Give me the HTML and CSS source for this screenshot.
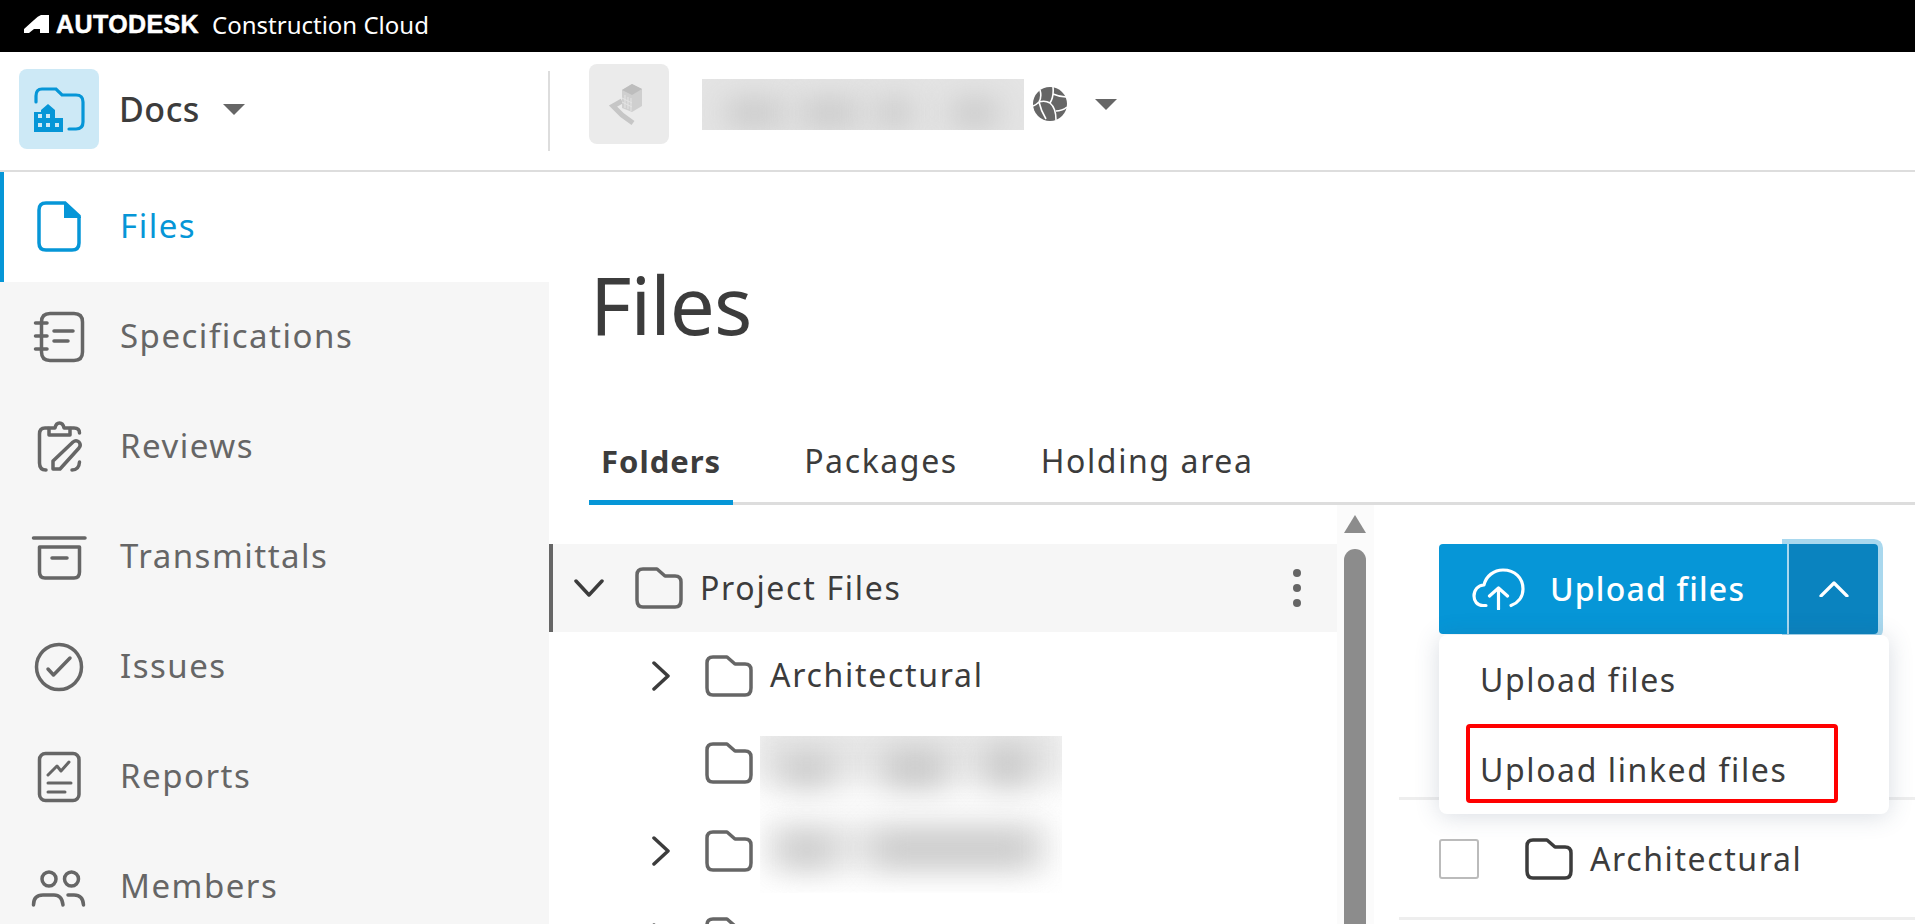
FILE: index.html
```html
<!DOCTYPE html>
<html lang="en">
<head>
  <meta charset="UTF-8" />
  <title>Docs - Files</title>
  <link rel="stylesheet" href="styles.css">
</head>
<body>
  <svg class="defs" width="0" height="0">
    <symbol id="folder" viewBox="0 0 48 42">
      <path d="M2 8Q2 2 8 2H22L30 9H40Q46 9 46 15V33Q46 40 40 40H8Q2 40 2 33Z" fill="none" stroke="currentColor" stroke-width="3.5" stroke-linejoin="round"/>
    </symbol>
    <symbol id="chev-right" viewBox="0 0 20 30">
      <path d="M3 2L17 15L3 28" fill="none" stroke="currentColor" stroke-width="3.5" stroke-linecap="round" stroke-linejoin="round"/>
    </symbol>
  </svg>

  <div class="topbar">
    <svg class="adsk-mark" width="25" height="18" viewBox="0 0 25 18"><path d="M0 18V14L10 5Q14 1 17 0H25V18H16V14H10L5 18Z" fill="#fff"/></svg>
    <span class="adsk-name">AUTODESK</span>
    <span class="adsk-product">Construction Cloud</span>
  </div>

  <header class="appbar">
    <div class="app-switch">
      <div class="tile tile-docs">
        <svg width="80" height="80" viewBox="0 0 80 80">
          <path d="M17 33V27Q17 20 23 20H37L43 26H57Q64 26 64 33V53Q64 60 57 60H50" fill="none" stroke="#0696d7" stroke-width="3.2" stroke-linecap="round"/>
          <path d="M15 63V43H22V41L29 35L36 41V49H44V63Z" fill="#0696d7"/>
          <path d="M19 45h4v4h-4zM27 45h4v4h-4zM19 54h4v4h-4zM27 54h4v4h-4zM36 54h4v4h-4z" fill="#cde9f6"/>
        </svg>
      </div>
      <span class="app-name">Docs</span>
      <span class="caret"></span>
    </div>
    <div class="project-switch">
      <div class="tile tile-project">
        <svg width="80" height="80" viewBox="0 0 80 80">
          <path d="M33 37L24 42L33 51L44 59" fill="none" stroke="#c6c6c6" stroke-width="5"/>
          <path d="M33 26L43 20L53 25V42L43 48L33 44Z" fill="#cfcfcf"/>
          <path d="M33 26L43 20L53 25L43 31Z" fill="#bdbdbd"/>
          <path d="M36 31V44M39 33V45M42 34V47M33 34L43 39M33 38L43 43" stroke="#e4e4e4" stroke-width="1"/>
        </svg>
      </div>
      <div class="blur-box blur-project">
        <i style="left:25px;width:55px"></i>
        <i style="left:100px;width:55px"></i>
        <i style="left:175px;width:35px"></i>
        <i style="left:250px;width:45px"></i>
      </div>
      <svg class="globe" width="34" height="34" viewBox="0 0 34 34">
        <circle cx="17" cy="17" r="17" fill="#666"/>
        <path d="M7 3Q9 10 6 15Q3 18 0 19M6 15Q12 13 17 16Q23 21 23 33M17 16Q21 10 20 0M20 7Q27 10 33 10M6 15Q8 24 13 32M23 24Q29 24 34 20" fill="none" stroke="#fff" stroke-width="1.6"/>
      </svg>
      <span class="caret caret-project"></span>
    </div>
  </header>

  <div class="layout">
    <nav class="sidebar">
      <a class="nav-item active">
        <svg width="60" height="60" viewBox="0 0 60 60">
          <path d="M17 6H36L50 19V46Q50 53 43 53H17Q10 53 10 46V13Q10 6 17 6Z" fill="none" stroke="currentColor" stroke-width="3.5"/>
          <path d="M35 5L52 20V21H35Z" fill="currentColor"/>
        </svg>
        <span>Files</span>
      </a>
      <a class="nav-item">
        <svg width="60" height="60" viewBox="0 0 60 60">
          <g fill="none" stroke="currentColor" stroke-width="3.5" stroke-linecap="round">
            <path d="M12.5 15Q12.5 6.5 21 6.5H45Q53.5 6.5 53.5 15V45Q53.5 53.5 45 53.5H21Q12.5 53.5 12.5 45Z"/>
            <path d="M6.5 16H18M6.5 29H18M6.5 42H18M25 24H44M25 34H39"/>
          </g>
        </svg>
        <span>Specifications</span>
      </a>
      <a class="nav-item">
        <svg width="60" height="60" viewBox="0 0 60 60">
          <g fill="none" stroke="currentColor" stroke-width="3.5" stroke-linecap="round" stroke-linejoin="round">
            <path d="M19 11H16Q10.5 11 10.5 17V46Q10.5 53 17 53M42 11H45Q50.5 11 50.5 16M50.5 45Q50 53 43 53"/>
            <path d="M20 18V11H26Q27 6 30.5 6Q34 6 35 11H41V18Z"/>
            <path d="M24 52V44L44 25Q47 22.5 50 25Q52.5 28 50 31L31 52Z"/>
          </g>
        </svg>
        <span>Reviews</span>
      </a>
      <a class="nav-item">
        <svg width="60" height="60" viewBox="0 0 60 60">
          <g fill="none" stroke="currentColor" stroke-width="3.5" stroke-linecap="round" stroke-linejoin="round">
            <path d="M4.5 11H56M10.5 20H50.5V45Q50.5 51 45 51H16Q10.5 51 10.5 45ZM23 31H38"/>
          </g>
        </svg>
        <span>Transmittals</span>
      </a>
      <a class="nav-item">
        <svg width="60" height="60" viewBox="0 0 60 60">
          <circle cx="30" cy="30" r="22.5" fill="none" stroke="currentColor" stroke-width="3.5"/>
          <path d="M19 32L24.5 38L41 21" fill="none" stroke="currentColor" stroke-width="3.5" stroke-linecap="round" stroke-linejoin="round"/>
        </svg>
        <span>Issues</span>
      </a>
      <a class="nav-item">
        <svg width="60" height="60" viewBox="0 0 60 60">
          <rect x="10.5" y="6.5" width="39.5" height="47" rx="6" fill="none" stroke="currentColor" stroke-width="3.5"/>
          <path d="M19 28L28 19L32 24L40 15M19 36H42M19 45H36" fill="none" stroke="currentColor" stroke-width="3" stroke-linecap="round" stroke-linejoin="round"/>
        </svg>
        <span>Reports</span>
      </a>
      <a class="nav-item">
        <svg width="60" height="60" viewBox="0 0 60 60">
          <g fill="none" stroke="currentColor" stroke-width="3.5" stroke-linecap="round">
            <circle cx="20" cy="22" r="7"/>
            <circle cx="42.5" cy="22" r="7"/>
            <path d="M4.5 48Q4.5 38 14 38H25Q33 38 34 48M39 38H45Q54 38 54.5 48"/>
          </g>
        </svg>
        <span>Members</span>
      </a>
    </nav>

    <main class="content">
      <h1 class="page-title">Files</h1>
      <div class="tabs">
        <a class="tab active">Folders</a>
        <a class="tab">Packages</a>
        <a class="tab">Holding area</a>
      </div>

      <div class="split">
        <section class="tree">
          <div class="tree-row selected">
            <svg class="chev-down" width="30" height="18" viewBox="0 0 30 18"><path d="M2 2L15 16L28 2" fill="none" stroke="#3c3c3c" stroke-width="3.5" stroke-linecap="round" stroke-linejoin="round"/></svg>
            <svg class="folder" width="48" height="42"><use href="#folder"/></svg>
            <span class="tree-label">Project Files</span>
            <span class="kebab"><b></b><b></b><b></b></span>
          </div>
          <div class="tree-row nested">
            <svg class="chev" width="20" height="30"><use href="#chev-right"/></svg>
            <svg class="folder" width="48" height="42"><use href="#folder"/></svg>
            <span class="tree-label">Architectural</span>
          </div>
          <div class="tree-row nested">
            <span class="chev-space"></span>
            <svg class="folder" width="48" height="42"><use href="#folder"/></svg>
          </div>
          <div class="tree-row nested">
            <svg class="chev" width="20" height="30"><use href="#chev-right"/></svg>
            <svg class="folder" width="48" height="42"><use href="#folder"/></svg>
          </div>
          <div class="tree-row nested">
            <svg class="chev" width="20" height="30"><use href="#chev-right"/></svg>
            <svg class="folder" width="48" height="42"><use href="#folder"/></svg>
          </div>
          <div class="blur-box blur-tree">
            <i class="wash" style="left:-10px;top:-20px;width:320px;height:70px"></i>
            <i class="wash" style="left:5px;top:85px;width:285px;height:50px"></i>
            <i style="left:22px;top:18px;width:50px;height:30px"></i>
            <i style="left:125px;top:14px;width:60px;height:36px"></i>
            <i style="left:225px;top:10px;width:45px;height:38px"></i>
            <i style="left:22px;top:100px;width:50px;height:28px"></i>
            <i style="left:115px;top:98px;width:155px;height:30px"></i>
          </div>
        </section>

        <div class="scrollbar">
          <span class="scroll-up"></span>
          <span class="scroll-thumb"></span>
        </div>

        <section class="files">
          <div class="upload">
            <div class="split-button">
              <button class="upload-main" type="button">
                <svg width="54" height="42" viewBox="0 0 54 42">
                  <path d="M14 37.5H11C5 37.5 2 33 2 28C2 22 6 17 12 17C14 8 22 2 31 2C43 2 51 10 51 21C51 29 46 35 39 37.5M26.5 41V20M17.5 28L26.5 20L35.5 28" fill="none" stroke="#fff" stroke-width="3.2" stroke-linecap="round" stroke-linejoin="round"/>
                </svg>
                <span>Upload files</span>
              </button>
              <button class="upload-toggle" type="button">
                <svg width="30" height="16" viewBox="0 0 30 16"><path d="M2 15L15 2L28 15" fill="none" stroke="#fff" stroke-width="3.2" stroke-linecap="round" stroke-linejoin="round"/></svg>
              </button>
            </div>
            <div class="upload-menu">
              <div class="menu-item">Upload files</div>
              <div class="menu-item">Upload linked files</div>
              <div class="highlight"></div>
            </div>
          </div>

          <div class="file-list">
            <div class="file-row">
              <span class="checkbox"></span>
              <svg class="file-folder" width="48" height="42"><use href="#folder"/></svg>
              <span class="file-name">Architectural</span>
            </div>
            <div class="file-row"></div>
          </div>
        </section>
      </div>
    </main>
  </div>
</body>
</html>
```

FILE: styles.css
```css
* {
  box-sizing: border-box;
}
html, body {
  height: 924px;
  overflow: hidden;
}
body {
  margin: 0;
  background: #fff;
  font-family: "Noto Sans", sans-serif;
  font-size: 32px;
  color: #3c3c3c;
  letter-spacing: 1.2px;
}
svg {
  display: block;
  flex: none;
}
.defs {
  position: absolute;
}

/* top black bar */
.topbar {
  height: 52px;
  background: #000;
  color: #fff;
  display: flex;
  align-items: center;
  padding: 0 0 4px 24px;
}
.adsk-name {
  margin-left: 7px;
  font-family: "Liberation Sans", sans-serif;
  font-weight: 700;
  font-size: 25px;
  letter-spacing: 0.4px;
  -webkit-text-stroke: 0.5px #fff;
}
.adsk-product {
  margin-left: 13px;
  font-size: 24px;
  letter-spacing: 0;
}

/* app + project header */
.appbar {
  height: 120px;
  display: flex;
  border-bottom: 2px solid #ddd;
}
.app-switch {
  width: 548px;
  padding: 0 0 4px 19px;
  display: flex;
  align-items: center;
}
.tile {
  width: 80px;
  height: 80px;
  border-radius: 8px;
  flex: none;
}
.tile-docs {
  background: #cde9f6;
}
.tile-project {
  background: #ebebeb;
}
.app-name {
  margin-left: 20px;
  font-size: 34px;
  font-weight: 500;
  letter-spacing: 0.5px;
}
.caret {
  margin-left: 23px;
  width: 0;
  height: 0;
  border-left: 11px solid transparent;
  border-right: 11px solid transparent;
  border-top: 11px solid #666;
}
.project-switch {
  flex: 1;
  position: relative;
  padding: 0 0 14px 41px;
  display: flex;
  align-items: center;
}
.project-switch::before {
  content: "";
  position: absolute;
  left: 0;
  top: 19px;
  width: 2px;
  height: 80px;
  background: #ddd;
}
.blur-box {
  overflow: hidden;
  position: relative;
}
.blur-box i {
  position: absolute;
  background: #c4c4c4;
  filter: blur(15px);
}
.blur-project {
  width: 322px;
  height: 51px;
  margin-left: 33px;
  background: #e4e4e4;
}
.blur-project i {
  top: 22px;
  height: 24px;
}
.globe {
  margin-left: 9px;
}
.caret-project {
  margin-left: 28px;
}

/* left navigation */
.layout {
  display: flex;
  height: 752px;
  overflow: hidden;
}
.sidebar {
  width: 549px;
  height: 752px;
  overflow: hidden;
  flex: none;
  background: #f6f6f6;
}
.nav-item {
  height: 110px;
  padding-left: 29px;
  display: flex;
  align-items: center;
  gap: 31px;
  color: #666;
  font-size: 33px;
  letter-spacing: 1.5px;
}
.nav-item span {
  padding-bottom: 4px;
}
.nav-item.active {
  background: #fff;
  color: #0696d7;
  border-left: 4px solid #0696d7;
  padding-left: 25px;
}

/* main area */
.content {
  flex: 1;
  min-width: 0;
}
.page-title {
  margin: 0;
  height: 267px;
  padding: 87px 0 0 41px;
  font-size: 80px;
  font-weight: 400;
  line-height: 90px;
  letter-spacing: -1px;
}
.tabs {
  margin-left: 40px;
  height: 68px;
  display: flex;
  align-items: flex-start;
  border-bottom: 3px solid #ddd;
  margin-top: -2px;
}
.tab {
  height: 68px;
  padding: 2px 12px 0;
  margin-right: 59px;
  line-height: 44px;
  font-size: 32px;
  letter-spacing: 1.6px;
}
.tab.active {
  font-weight: 700;
  font-size: 31px;
  letter-spacing: 1px;
  border-bottom: 5px solid #0696d7;
}
.split {
  display: flex;
  height: 420px;
  overflow: hidden;
}

/* folder tree */
.tree {
  width: 788px;
  flex: none;
  padding-top: 39px;
  position: relative;
  letter-spacing: 1.7px;
}
.tree-row {
  height: 87.5px;
  display: flex;
  align-items: center;
  color: #666;
}
.tree-row.selected {
  height: 88px;
  background: #f6f6f6;
  border-left: 4px solid #666;
  padding-left: 21px;
}
.tree-row.nested {
  padding-left: 102px;
}
.chev-down {
  margin-right: 31px;
}
.chev, .chev-space {
  width: 20px;
  margin-right: 34px;
  color: #3c3c3c;
}
.tree-label {
  margin-left: 17px;
  padding-bottom: 2px;
  color: #3c3c3c;
}
.kebab {
  margin-left: auto;
  margin-right: 36px;
  display: flex;
  flex-direction: column;
  gap: 7px;
}
.kebab b {
  width: 8px;
  height: 8px;
  border-radius: 50%;
  background: #666;
}
.blur-tree {
  position: absolute;
  left: 211px;
  top: 231px;
  width: 302px;
  height: 157px;
  background: #fff;
}
.blur-tree i {
  background: #c8c8c8;
}
.blur-tree i.wash {
  background: #e6e6e6;
}

/* scrollbar beside the tree */
.scrollbar {
  width: 37px;
  flex: none;
  background: #fbfbfb;
  padding: 10px 0 0 7px;
}
.scroll-up {
  display: block;
  width: 0;
  height: 0;
  border-left: 11px solid transparent;
  border-right: 11px solid transparent;
  border-bottom: 18px solid #8c8c8c;
}
.scroll-thumb {
  display: block;
  width: 22px;
  height: 400px;
  margin-top: 16px;
  border-radius: 11px 11px 0 0;
  background: #8c8c8c;
}

/* right panel */
.files {
  flex: 1;
  padding: 39px 0 0 25px;
}
.upload {
  position: relative;
  margin-left: 40px;
}
.split-button {
  display: flex;
  width: 439px;
  height: 90px;
}
.split-button button {
  border: 0;
  padding: 0;
  color: #fff;
  font: inherit;
  letter-spacing: inherit;
  display: flex;
  align-items: center;
}
.upload-main {
  width: 348px;
  background: #0696d7;
  border-radius: 4px 0 0 4px;
  padding-left: 33px !important;
  gap: 24px;
  font-weight: 500 !important;
  position: relative;
  z-index: 1;
}
.upload-main span {
  padding-bottom: 2px;
}
.upload-toggle {
  flex: 1;
  background: #0a83bf;
  border-left: 2px solid #a9d8ee !important;
  border-radius: 0 4px 4px 0;
  box-shadow: 0 0 0 5px #a9d8ee;
  justify-content: center;
}
.upload-menu {
  position: absolute;
  top: 91px;
  left: 0;
  width: 450px;
  height: 179px;
  background: #fff;
  border-radius: 8px;
  box-shadow: 0 2px 24px rgba(60, 80, 110, 0.2);
  z-index: 2;
  letter-spacing: 1.6px;
}
.menu-item {
  height: 90px;
  line-height: 90px;
  padding-left: 41px;
}
.highlight {
  position: absolute;
  left: 27px;
  top: 89px;
  width: 372px;
  height: 79px;
  border: 4px solid #f00;
  border-radius: 4px;
}
.file-list {
  margin-top: 163px;
}
.file-row {
  height: 120px;
  border-top: 3px solid #eee;
  display: flex;
  align-items: center;
  padding-left: 40px;
  letter-spacing: 1.6px;
}
.checkbox {
  width: 40px;
  height: 40px;
  border: 2px solid #bbb;
  border-radius: 3px;
}
.file-folder {
  margin-left: 46px;
  color: #3c3c3c;
}
.file-name {
  margin-left: 17px;
}
```
